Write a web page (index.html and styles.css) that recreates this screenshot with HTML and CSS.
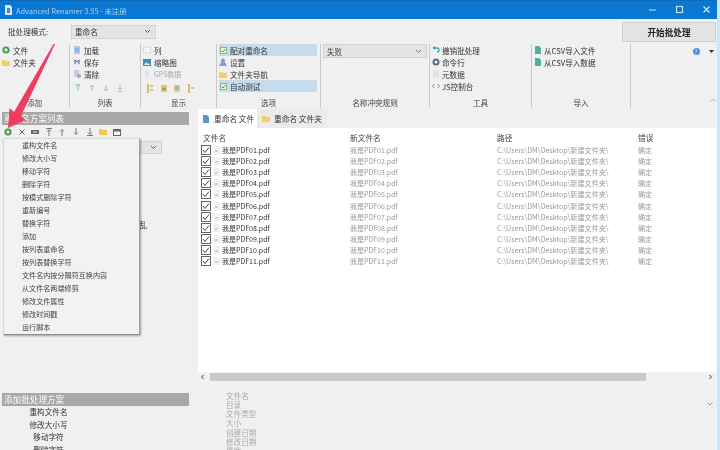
FILE: index.html
```html
<!DOCTYPE html>
<html>
<head>
<meta charset="utf-8">
<title>Advanced Renamer</title>
<link rel="stylesheet" href="styles.css">
</head>
<body>
<div class="window">
  <header class="titlebar">
    <svg class="app-icon" width="7" height="10" viewBox="0 0 7 10"><path d="M0 0h5l2 2v8H0z" fill="#dbe9f6"/><path d="M2 3h3v5H2z" fill="#3d8fd0"/></svg>
    <span class="title-text">Advanced Renamer 3.95 - 未注册</span>
    <div class="win-buttons">
      <svg width="10" height="10" viewBox="0 0 10 10"><path d="M1 5h7" stroke="#9fd0f0" stroke-width="1.2"/></svg>
      <svg width="10" height="10" viewBox="0 0 10 10"><rect x="1.5" y="1.5" width="6" height="6" fill="none" stroke="#bfe0f5" stroke-width="1.2"/></svg>
      <svg width="10" height="10" viewBox="0 0 10 10"><path d="M1.5 1.5l6 6M7.5 1.5l-6 6" stroke="#d5ebf8" stroke-width="1.1"/></svg>
    </div>
  </header>

  <div class="mode-row">
    <span class="mode-label">批处理模式:</span>
    <div class="select mode-select"><span>重命名</span><svg class="chev" width="7" height="5" viewBox="0 0 7 5"><path d="M1 1l2.5 2.5L6 1" fill="none" stroke="#555"/></svg></div>
    <button class="start-btn">开始批处理</button>
  </div>

  <div class="ribbon">
    <section class="group g-add">
      <div class="items">
        <div class="rb"><svg width="8" height="8" viewBox="0 0 8 8"><circle cx="4" cy="4" r="3.6" fill="#3f9a52"/><path d="M4 2v4M2 4h4" stroke="#fff"/></svg>文件</div>
        <div class="rb"><svg width="8" height="7" viewBox="0 0 8 7"><path d="M0 1h3l1 1h4v5H0z" fill="#f3cf63"/></svg>文件夹</div>
      </div>
      <div class="group-label">添加</div>
    </section>
    <section class="group g-list">
      <div class="items">
        <div class="rb"><svg width="8" height="8" viewBox="0 0 8 8"><rect x="1" y="0" width="6" height="8" fill="#a9cbe6"/><path d="M2 3h4M2 5h4" stroke="#6fa2cc"/></svg>加载</div>
        <div class="rb"><svg width="8" height="8" viewBox="0 0 8 8"><path d="M1 1h6v6H1z" fill="#dfe6f0"/><path d="M2 6V2l2 2 2-2v4" fill="none" stroke="#56688e"/></svg>保存</div>
        <div class="rb"><svg width="8" height="8" viewBox="0 0 8 8"><rect x="1" y="0" width="5" height="7" fill="#b9d2ea"/><circle cx="6" cy="6" r="2" fill="#e58a8a"/></svg>清除</div>
        <div class="mini-icons">
          <svg width="8" height="8" viewBox="0 0 8 8"><path d="M4 7V2M2 3l2-2 2 2M1.5 .5h5" fill="none" stroke="#9cc7c0"/></svg>
          <svg width="8" height="8" viewBox="0 0 8 8"><path d="M4 7V2M2 3l2-2 2 2" fill="none" stroke="#9cc7c0"/></svg>
          <svg width="8" height="8" viewBox="0 0 8 8"><path d="M4 1v5M2 5l2 2 2-2" fill="none" stroke="#9cc7c0"/></svg>
          <svg width="8" height="8" viewBox="0 0 8 8"><path d="M4 0v5M2 4l2 2 2-2M1.5 7.5h5" fill="none" stroke="#9cc7c0"/></svg>
        </div>
      </div>
      <div class="group-label">列表</div>
    </section>
    <section class="group g-show">
      <div class="items">
        <div class="rb"><svg width="8" height="8" viewBox="0 0 8 8"><rect x="0.5" y="1" width="7" height="6" fill="#f3f4f6" stroke="#d5d8de"/></svg>列</div>
        <div class="rb"><svg width="8" height="7" viewBox="0 0 8 7"><rect width="8" height="7" fill="#3f8fb8"/><path d="M1 6l2-3 2 2 1-1 1 2z" fill="#cfe6f2"/></svg>缩略图</div>
        <div class="rb dim"><svg width="8" height="8" viewBox="0 0 8 8"><circle cx="4" cy="3" r="2.5" fill="#dfe5e8"/><path d="M4 5v3" stroke="#cfd6da"/></svg>GPS数据</div>
        <div class="mini-icons wide">
          <svg width="8" height="9" viewBox="0 0 8 9"><path d="M2 0v9" stroke="#d8c060" stroke-width="2"/><path d="M4 2h3M4 6h3" stroke="#8a9a80"/></svg>
          <svg width="8" height="9" viewBox="0 0 8 9"><path d="M1 1h6v7H1z" fill="#d7c878"/><path d="M2 6l2-3 2 3z" fill="#7c9a70"/></svg>
          <svg width="8" height="9" viewBox="0 0 8 9"><path d="M1 1h6v7H1z" fill="#d7d0a0"/><path d="M2 3h4M2 5h4" stroke="#87a080"/></svg>
          <svg width="8" height="9" viewBox="0 0 8 9"><path d="M2 0v9" stroke="#d8c060" stroke-width="2"/><path d="M4 4h3" stroke="#8a9a80"/></svg>
        </div>
      </div>
      <div class="group-label">显示</div>
    </section>
    <section class="group g-opt">
      <div class="items">
        <div class="rb on"><svg width="7" height="7" viewBox="0 0 7 7"><rect x=".5" y=".5" width="6" height="6" fill="#e8f3e8" stroke="#8cb88c"/><path d="M1.5 3.5l1.5 1.5 2.5-3" fill="none" stroke="#4f9f4f"/></svg>配对重命名</div>
        <div class="rb"><svg width="8" height="8" viewBox="0 0 8 8"><circle cx="4" cy="2.5" r="2" fill="#8f8fd0"/><path d="M0 8l2-4h4l2 4z" fill="#8aa0d8"/></svg>设置</div>
        <div class="rb"><svg width="8" height="7" viewBox="0 0 8 7"><path d="M0 1h3l1 1h4v5H0z" fill="#f3cf63"/></svg>文件夹导航</div>
        <div class="rb on"><svg width="7" height="7" viewBox="0 0 7 7"><rect x=".5" y=".5" width="6" height="6" fill="#e8f3e8" stroke="#8cb88c"/><path d="M1.5 3.5l1.5 1.5 2.5-3" fill="none" stroke="#4f9f4f"/></svg>自动测试</div>
      </div>
      <div class="group-label">选项</div>
    </section>
    <section class="group g-rule">
      <div class="select rule-select"><span>失败</span><svg class="chev" width="7" height="5" viewBox="0 0 7 5"><path d="M1 1l2.5 2.5L6 1" fill="none" stroke="#777"/></svg></div>
      <div class="group-label">名称冲突规则</div>
    </section>
    <section class="group g-tools">
      <div class="items">
        <div class="rb"><svg width="8" height="8" viewBox="0 0 8 8"><path d="M1 2h4a2 2 0 0 1 0 4" fill="none" stroke="#38a8b0" stroke-width="1.3"/><path d="M3 0L0.5 2 3 4z" fill="#38a8b0"/></svg>撤销批处理</div>
        <div class="rb"><svg width="8" height="8" viewBox="0 0 8 8"><circle cx="4" cy="4" r="2.5" fill="none" stroke="#606a78" stroke-width="2"/></svg>命令行</div>
        <div class="rb"><svg width="8" height="8" viewBox="0 0 8 8"><rect x="1" y="0" width="6" height="8" fill="#e0e3e8"/></svg>元数据</div>
        <div class="rb"><svg width="8" height="8" viewBox="0 0 8 8"><path d="M2.5 2L.5 4l2 2M5.5 2l2 2-2 2" fill="none" stroke="#7a8ea8"/></svg>JS控制台</div>
      </div>
      <div class="group-label">工具</div>
    </section>
    <section class="group g-import">
      <div class="items">
        <div class="rb"><svg width="6" height="8" viewBox="0 0 6 8"><path d="M0 0h4l2 2v6H0z" fill="#52b09a"/></svg>从CSV导入文件</div>
        <div class="rb"><svg width="6" height="8" viewBox="0 0 6 8"><path d="M0 0h4l2 2v6H0z" fill="#52b09a"/></svg>从CSV导入数据</div>
      </div>
      <div class="group-label">导入</div>
    </section>
    <section class="group g-help">
      <div class="help-row">
        <span class="help-dot">?</span>
        <svg width="5" height="3" viewBox="0 0 5 3"><path d="M0 0h5L2.5 3z" fill="#333"/></svg>
      </div>
      <svg class="collapse" width="6" height="4" viewBox="0 0 6 4"><path d="M.5 3.5L3 1l2.5 2.5" fill="none" stroke="#bbb"/></svg>
    </section>
  </div>

  <main class="main">
    <aside class="left">
      <div class="bar">重命名方案列表</div>
      <div class="toolbar">
        <svg width="8" height="8" viewBox="0 0 8 8"><circle cx="4" cy="4" r="3.6" fill="#3f9a52"/><path d="M4 2v4M2 4h4" stroke="#fff"/></svg>
        <svg width="8" height="8" viewBox="0 0 8 8"><path d="M1.5 1.5l5 5M6.5 1.5l-5 5" stroke="#666"/></svg>
        <svg width="8" height="8" viewBox="0 0 8 8"><path d="M0 2h8v4H0z" fill="#666"/><path d="M2 4h4" stroke="#eee"/></svg>
        <svg width="8" height="8" viewBox="0 0 8 8"><path d="M4 8V2M2 3.5L4 1.5l2 2M1 .5h6" fill="none" stroke="#777"/></svg>
        <svg width="8" height="8" viewBox="0 0 8 8"><path d="M4 8V2M2 3.5L4 1.5l2 2" fill="none" stroke="#777"/></svg>
        <svg width="8" height="8" viewBox="0 0 8 8"><path d="M4 0v6M2 4.5L4 6.5l2-2" fill="none" stroke="#777"/></svg>
        <svg width="8" height="8" viewBox="0 0 8 8"><path d="M4 0v6M2 4.5L4 6.5l2-2M1 7.5h6" fill="none" stroke="#777"/></svg>
        <svg width="8" height="7" viewBox="0 0 8 7"><path d="M0 1h3l1 1h4v5H0z" fill="#f3c84f"/></svg>
        <svg width="8" height="8" viewBox="0 0 8 8"><rect x=".5" y="1.5" width="7" height="6" fill="#f5f5f5" stroke="#666"/><path d="M1 1.5h6v2H1z" fill="#666"/></svg>
      </div>
      <div class="under-popup">
        <div class="select ghost-select"><svg class="chev" width="7" height="5" viewBox="0 0 7 5"><path d="M1 1l2.5 2.5L6 1" fill="none" stroke="#666"/></svg></div>
        <div class="ghost-text">乱</div>
      </div>
      <div class="bar lower">添加批处理方案</div>
      <ul class="method-list">
        <li>重构文件名</li>
        <li>修改大小写</li>
        <li>移动字符</li>
        <li>删除字符</li>
      </ul>
    </aside>

    <section class="right">
      <div class="tabs">
        <div class="tab active"><svg width="6" height="8" viewBox="0 0 6 8"><path d="M0 0h4l2 2v6H0z" fill="#5f93c8"/></svg>重命名 文件</div>
        <div class="tab"><svg width="8" height="7" viewBox="0 0 8 7"><path d="M0 1h3l1 1h4v5H0z" fill="#f3cf63"/></svg>重命名 文件夹</div>
      </div>
      <div class="table-wrap">
        <div class="row head"><span class="c1">文件名</span><span class="c2">新文件名</span><span class="c3">路径</span><span class="c4">错误</span></div>
        <div id="rows" class="rows"></div>
        <div class="hscroll">
          <svg width="5" height="6" viewBox="0 0 5 6"><path d="M3.5 1L1.5 3l2 2" fill="none" stroke="#444"/></svg>
          <div class="thumb"></div>
          <svg class="scroll-right" width="5" height="6" viewBox="0 0 5 6"><path d="M1.5 1l2 2-2 2" fill="none" stroke="#444"/></svg>
        </div>
      </div>
      <div class="details">
        <span>文件名</span><span>目录</span><span>文件类型</span><span>大小</span><span>创建日期</span><span>修改日期</span><span>属性</span>
        <svg class="expand" width="6" height="4" viewBox="0 0 6 4"><path d="M.5 .5L3 3 5.5 .5" fill="none" stroke="#999"/></svg>
      </div>
    </section>
  </main>

  <div class="popup">
    <div>重构文件名</div><div>修改大小写</div><div>移动字符</div><div>删除字符</div><div>按模式删除字符</div><div>重新编号</div><div>替换字符</div><div>添加</div><div>按列表重命名</div><div>按列表替换字符</div><div>文件名内按分隔符互换内容</div><div>从文件名两端修剪</div><div>修改文件属性</div><div>修改时间戳</div><div>运行脚本</div>
  </div>

  <svg class="arrow" width="60" height="90" viewBox="0 0 60 90"><path d="M55 0L21 72 25.5 76 8 84 9.5 64 14 68 53.5 0z" fill="#ee3d5e"/></svg>
</div>
<script src="rows.js"></script>
</body>
</html>
```

FILE: rows.js
```js
var box = document.getElementById('rows');
for (var i = 1; i <= 11; i++) {
  var n = (i < 10 ? '0' : '') + i;
  var r = document.createElement('div');
  r.className = 'row';
  r.innerHTML =
    '<span class="c1"><svg width="10" height="10" viewBox="0 0 10 10"><rect x=".5" y=".5" width="9" height="9" fill="#fff" stroke="#666"/><path d="M2 5l2 2.5 4-5" fill="none" stroke="#444"/></svg>' +
    '<svg width="7" height="8" viewBox="0 0 7 8"><path d="M1 0h4l2 2v6H1z" fill="#f4f4f4" stroke="#ddd" stroke-width=".5"/><path d="M2 5h3" stroke="#b0b0b0"/></svg>' +
    '<b>我是PDF' + n + '.pdf</b></span>' +
    '<span class="c2 dim">我是PDF' + n + '.pdf</span>' +
    '<span class="c3 dim">C:\\Users\\DM\\Desktop\\新建文件夹\\</span>' +
    '<span class="c4 dim">确定</span>';
  box.appendChild(r);
}
```

FILE: styles.css
```css
* { box-sizing: border-box; }
html, body { margin: 0; padding: 0; }
body {
  width: 720px;
  height: 450px;
  overflow: hidden;
  background: #f0f0f0;
  font-family: "Noto Sans CJK SC", "Noto Sans", sans-serif;
  color: #333;
  font-size: 7.6px;
}
.window {
  position: relative;
  width: 720px;
  height: 450px;
  overflow: hidden;
  background: #f0f0f0;
  border-right: 3px solid #cfe6f6;
  filter: blur(0.4px);
}
svg { display: block; flex: none; }

.titlebar {
  height: 19px;
  display: flex;
  align-items: center;
  padding-left: 5px;
  background: #0a78d2;
  border-top: 1px solid #0d6ab4;
  color: #a9d4f2;
  font-size: 7.4px;
}
.app-icon { margin-right: 4px; }
.win-buttons {
  margin-left: auto;
  display: flex;
  gap: 17px;
  padding-right: 5.5px;
}

.mode-row {
  height: 25px;
  display: flex;
  align-items: center;
  padding: 0 0 0 8px;
}
.mode-label { width: 63px; }
.select {
  display: flex;
  align-items: center;
  justify-content: space-between;
  background: #e4e4e4;
  border: 1px solid #d2d2d2;
  padding: 0 4px 0 3px;
}
.mode-select { width: 85px; height: 14px; }
.start-btn {
  margin-left: auto;
  margin-right: 1px;
  width: 94px;
  height: 20px;
  background: #e3e3e3;
  border: 1px solid #cfcfcf;
  font: 700 8.6px "Noto Sans CJK SC", sans-serif;
  color: #222;
  padding: 0;
}

.ribbon {
  height: 64px;
  display: grid;
  grid-template-columns: 70px 71px 76px 104px 109px 102px 99px 1fr;
}
.group {
  position: relative;
  display: flex;
  flex-direction: column;
  border-right: 1px solid #c8c8c8;
  padding: 0 0 0 2px;
}
.g-list { padding-left: 3px; }
.g-show { padding-left: 2px; }
.g-opt { padding: 0 3px 0 2px; }
.g-rule { padding: 0 2px 0 2px; }
.g-tools { padding-left: 2px; }
.g-tools .rb { gap: 2px; }
.g-import { padding-left: 3px; }
.g-help { border-right: 0; }
.items { display: flex; flex-direction: column; }
.rb {
  height: 12px;
  display: flex;
  align-items: center;
  gap: 3px;
  white-space: nowrap;
}
.rb.on { background: #c4dcee; padding-left: 1px; }
.rb.dim { color: #aaa; font-size: 7px; }
.dim { color: #999; }
.mini-icons {
  display: flex;
  gap: 6px;
  margin-top: 3px;
  height: 10px;
  align-items: center;
  padding-left: 1px;
}
.mini-icons.wide { gap: 5.5px; padding-left: 3px; }
.group-label {
  position: absolute;
  left: 0;
  right: 0;
  bottom: 0;
  text-align: center;
  font-size: 7.6px;
  line-height: 11px;
  color: #444;
}
.rule-select { height: 14px; color: #444; }
.help-row {
  display: flex;
  align-items: center;
  justify-content: flex-end;
  gap: 9px;
  padding: 4px 3.5px 0 0;
}
.help-dot {
  width: 7px;
  height: 7px;
  border-radius: 50%;
  background: #4a8fdc;
  color: #e8f2fb;
  font-size: 6px;
  line-height: 7px;
  text-align: center;
}
.collapse { position: absolute; right: 1px; bottom: 6px; }

.main {
  height: 342px;
  display: flex;
  padding: 0 1px 0 2px;
}
.left {
  width: 187px;
  margin-top: 4px;
  flex: none;
}
.bar {
  height: 13px;
  background: #a8a8a8;
  color: #fff;
  font-size: 8.6px;
  line-height: 13px;
  padding-left: 2px;
  white-space: nowrap;
}
.toolbar {
  height: 13px;
  display: flex;
  align-items: center;
  gap: 5.6px;
  padding-left: 2px;
}
.under-popup {
  height: 255px;
  padding: 3px 0 0 136px;
}
.ghost-select {
  width: 24px;
  height: 13px;
  justify-content: flex-end;
}
.ghost-text {
  margin-top: 66px;
  padding-left: 1px;
  font-size: 8px;
  line-height: 10px;
}
.method-list {
  list-style: none;
  margin: 0;
  padding: 0;
  width: 93px;
  text-align: center;
  font-size: 7.6px;
  color: #333;
}
.method-list li { height: 12.5px; line-height: 12.5px; }

.right {
  flex: 1;
  margin-left: 9px;
  min-width: 0;
}
.tabs {
  height: 20px;
  display: flex;
  align-items: stretch;
  padding-top: 1px;
}
.tab {
  display: flex;
  align-items: center;
  gap: 4px;
  padding: 0 5px;
  background: #ebebeb;
  white-space: nowrap;
  font-size: 7.7px;
}
.tab.active { background: #fff; width: 59px; padding-left: 5px; gap: 5px; }
.table-wrap {
  position: relative;
  height: 253px;
  background: #fff;
  padding-top: 3px;
  display: flex;
  flex-direction: column;
}
.row {
  display: flex;
  height: 11.2px;
  align-items: center;
  white-space: nowrap;
  font-size: 7px;
}
.row.head { height: 12px; margin-bottom: 1px; font-size: 7.7px; color: #444; }
.rows { flex: 1; }
.c1 { width: 147px; padding-left: 3px; display: flex; align-items: center; gap: 2px; }
.row.head .c1 { padding-left: 5px; }
.c1 b { font-weight: 400; color: #333; font-size: 7px; }
.c2 { width: 147px; padding-left: 5px; }
.c3 { width: 141px; padding-left: 5px; font-size: 7.1px; }
.row.head .c3 { font-size: 7.7px; }
.c4 { flex: 1; padding-left: 5px; }
.hscroll {
  height: 9px;
  display: flex;
  align-items: center;
  background: #f0f0f0;
  border-top: 1px solid #f6f6f6;
}
.hscroll svg { margin: 0 2px; }
.hscroll .scroll-right { margin-left: auto; margin-right: 3px; }
.thumb {
  height: 8px;
  width: 436px;
  margin-left: 3px;
  background: #c9c9c9;
}
.details {
  position: relative;
  padding: 9.5px 0 0 28px;
  display: flex;
  flex-direction: column;
  color: #aaa;
  font-size: 7.6px;
}
.details span { height: 9.3px; line-height: 9.3px; white-space: nowrap; }
.expand { position: absolute; right: 3px; top: 21px; }

.popup {
  position: absolute;
  left: 3px;
  top: 138px;
  width: 137px;
  height: 197px;
  background: #f2f2f2;
  border: 1px solid #d8d8d8;
  border-right-color: #a0a0a0;
  border-bottom-color: #909090;
  box-shadow: 1px 1px 2px rgba(0, 0, 0, .35);
  padding: 0 0 0 18px;
  font-size: 7.1px;
  color: #444;
}
.popup div { height: 13px; line-height: 13px; white-space: nowrap; }
.arrow { position: absolute; left: 0; top: 44px; }
```
